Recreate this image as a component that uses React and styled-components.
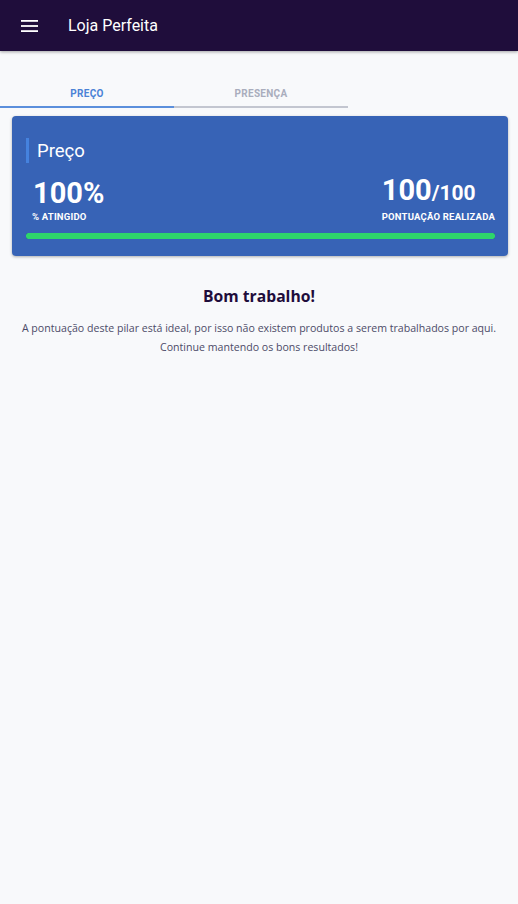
import React from "react";
import styled, { createGlobalStyle } from "styled-components";

const GlobalStyle = createGlobalStyle`
  body {
    margin: 0;
    background: #f8f9fb;
    font-family: Roboto, "Liberation Sans", sans-serif;
  }
`;

const Page = styled.div`
  min-height: 904px;
  background: #f8f9fb;
`;

const Header = styled.header`
  height: 51px;
  background: #1f0d3b;
  display: flex;
  align-items: center;
  padding: 0 21px;
  box-shadow: 0 1px 3px rgba(0, 0, 0, 0.35);
`;

const MenuButton = styled.button`
  background: transparent;
  border: none;
  padding: 0;
  margin-right: 30px;
  display: flex;
  cursor: pointer;
`;

const Title = styled.h1`
  margin: 0;
  color: #ffffff;
  font-family: Roboto, sans-serif;
  font-weight: 400;
  font-size: 16px;
`;

const Tabs = styled.div`
  display: flex;
  width: 348px;
  margin-top: 29px;
`;

const Tab = styled.div`
  flex: 1;
  height: 26px;
  display: flex;
  align-items: center;
  justify-content: center;
  font-family: Roboto, sans-serif;
  font-size: 10px;
  font-weight: 700;
  letter-spacing: 0.3px;
  color: ${(p) => (p.active ? "#4a82d6" : "#a9adbd")};
  border-bottom: 2px solid ${(p) => (p.active ? "#5b8fdc" : "#c3c6d0")};
`;

const Card = styled.div`
  margin: 8px 10px 0 12px;
  background: #3763b6;
  border-radius: 4px;
  padding: 22px 13px 17px 14px;
  box-shadow: 0 1px 3px rgba(0, 0, 0, 0.3);
  color: #ffffff;
`;

const CardTitle = styled.div`
  border-left: 3px solid #4582de;
  padding-left: 8px;
  height: 25px;
  display: flex;
  align-items: center;
  font-size: 18.5px;
  font-weight: 400;
`;

const Stats = styled.div`
  display: flex;
  justify-content: space-between;
  align-items: flex-end;
  margin-top: 12px;
  padding: 0 0 0 7px;
`;

const Stat = styled.div`
  display: flex;
  flex-direction: column;
  align-items: flex-start;
`;

const Big = styled.div`
  font-size: 29px;
  font-weight: 700;
  line-height: 31px;
`;

const Small = styled.span`
  font-size: 21px;
`;

const Label = styled.div`
  font-size: 9.5px;
  font-weight: 700;
  margin-top: 2px;
  letter-spacing: 0.2px;
  margin-left: ${(p) => (p.left ? "-1px" : "0")};
`;

const Track = styled.div`
  margin-top: 11px;
  height: 6px;
  border-radius: 2px;
  background: #2b4f93;
  overflow: hidden;
`;

const Fill = styled.div`
  height: 100%;
  background: #2ed66b;
  border-radius: 2px;
`;

const Message = styled.div`
  text-align: center;
  padding: 29px 8px 0;
  font-family: "Open Sans", sans-serif;
`;

const Heading = styled.h2`
  margin: 0 0 12px;
  font-size: 15.7px;
  font-weight: 700;
  color: #1f0d3b;
`;

const Text = styled.p`
  margin: 0;
  font-size: 10.6px;
  line-height: 19px;
  color: #4c4b68;
  white-space: nowrap;
`;

export default function App() {
  const percent = 100;
  return (
    <Page>
      <GlobalStyle />
      <Header>
        <MenuButton>
          <svg width="17" height="12" viewBox="0 0 17 12">
            <rect x="0" y="0" width="17" height="1.8" fill="#fff" />
            <rect x="0" y="5.1" width="17" height="1.8" fill="#fff" />
            <rect x="0" y="10.2" width="17" height="1.8" fill="#fff" />
          </svg>
        </MenuButton>
        <Title>Loja Perfeita</Title>
      </Header>
      <Tabs>
        <Tab active>PREÇO</Tab>
        <Tab>PRESENÇA</Tab>
      </Tabs>
      <Card>
        <CardTitle>Preço</CardTitle>
        <Stats>
          <Stat>
            <Big>{percent}%</Big>
            <Label left>% ATINGIDO</Label>
          </Stat>
          <Stat>
            <Big>
              100<Small>/100</Small>
            </Big>
            <Label>PONTUAÇÃO REALIZADA</Label>
          </Stat>
        </Stats>
        <Track>
          <Fill style={{ width: `${percent}%` }} />
        </Track>
      </Card>
      <Message>
        <Heading>Bom trabalho!</Heading>
        <Text>
          A pontuação deste pilar está ideal, por isso não existem produtos a serem trabalhados por aqui.
          <br />
          Continue mantendo os bons resultados!
        </Text>
      </Message>
    </Page>
  );
}
